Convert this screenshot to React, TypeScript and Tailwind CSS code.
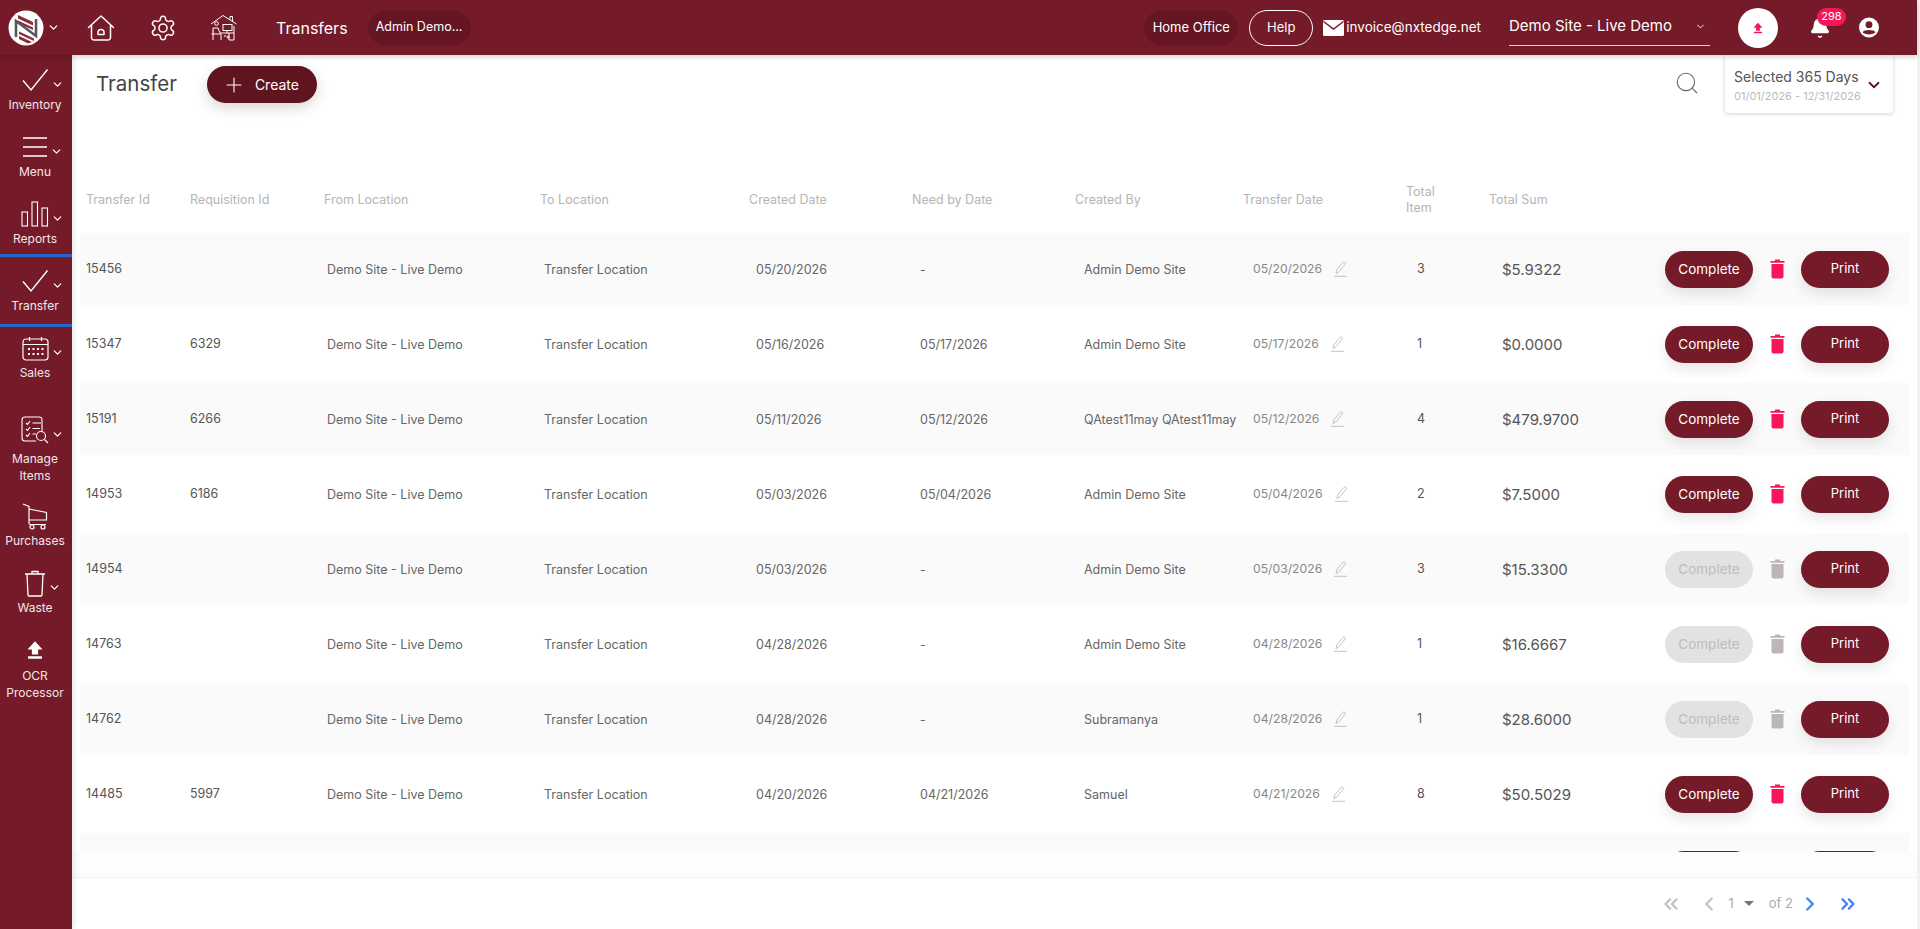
import { ChevronDown, Search, Plus, Bell, ChevronLeft, ChevronRight, ChevronsLeft, ChevronsRight } from 'lucide-react'
import type { ReactNode } from 'react'

type Row = {
  id: string
  req: string
  created: string
  need: string
  by: string
  date: string
  total: string
  sum: string
  active: boolean
}

const rows: Row[] = [
  { id: '15456', req: '', created: '05/20/2026', need: '-', by: 'Admin Demo Site', date: '05/20/2026', total: '3', sum: '$5.9322', active: true },
  { id: '15347', req: '6329', created: '05/16/2026', need: '05/17/2026', by: 'Admin Demo Site', date: '05/17/2026', total: '1', sum: '$0.0000', active: true },
  { id: '15191', req: '6266', created: '05/11/2026', need: '05/12/2026', by: 'QAtest11may QAtest11may', date: '05/12/2026', total: '4', sum: '$479.9700', active: true },
  { id: '14953', req: '6186', created: '05/03/2026', need: '05/04/2026', by: 'Admin Demo Site', date: '05/04/2026', total: '2', sum: '$7.5000', active: true },
  { id: '14954', req: '', created: '05/03/2026', need: '-', by: 'Admin Demo Site', date: '05/03/2026', total: '3', sum: '$15.3300', active: false },
  { id: '14763', req: '', created: '04/28/2026', need: '-', by: 'Admin Demo Site', date: '04/28/2026', total: '1', sum: '$16.6667', active: false },
  { id: '14762', req: '', created: '04/28/2026', need: '-', by: 'Subramanya', date: '04/28/2026', total: '1', sum: '$28.6000', active: false },
  { id: '14485', req: '5997', created: '04/20/2026', need: '04/21/2026', by: 'Samuel', date: '04/21/2026', total: '8', sum: '$50.5029', active: true },
]

const gridCols = 'grid grid-cols-[104px_134px_216px_209px_163px_163px_168px_163px_83px_1fr] pl-[6px]'

const CheckIcon = () => (
  <svg width="28" height="24" viewBox="0 0 28 24" fill="none" stroke="white" strokeWidth="1.4">
    <path d="M2 12.5 L10 22 L26.5 1.5" />
  </svg>
)

const MenuIcon = () => (
  <svg width="26" height="22" viewBox="0 0 26 22" fill="none" stroke="white" strokeWidth="1.6">
    <path d="M1 2h24M1 11h24M1 20h24" />
  </svg>
)

const BarsIcon = () => (
  <svg width="28" height="26" viewBox="0 0 28 26" fill="none" stroke="white" strokeWidth="1.1">
    <rect x="1" y="11" width="5.5" height="14" />
    <rect x="11" y="1" width="5.5" height="24" />
    <rect x="21" y="7" width="5.5" height="18" />
  </svg>
)

const CalendarIcon = () => (
  <svg width="27" height="25" viewBox="0 0 27 25" fill="none" stroke="white" strokeWidth="1.2">
    <rect x="1" y="3" width="25" height="21" rx="3" />
    <path d="M1 8.5h25M7.5 1v4M19.5 1v4" />
    <path d="M6 13h2M10.5 13h2M15 13h2M19.5 13h2M6 18h2M10.5 18h2M15 18h2M19.5 18h2" strokeWidth="2" />
  </svg>
)

const ManageIcon = () => (
  <svg width="28" height="28" viewBox="0 0 28 28" fill="none" stroke="white" strokeWidth="1.1">
    <path d="M21 15V4a3 3 0 0 0-3-3H4a3 3 0 0 0-3 3v18a3 3 0 0 0 3 3h11" />
    <path d="M5 7l1.5 1.5L9 5M5 13l1.5 1.5L9 11M5 19l1.5 1.5L9 17M11.5 7H20M11.5 12.5H19M11.5 18H15" />
    <circle cx="20" cy="20" r="4.5" />
    <path d="M23.5 23.5L27 27" />
  </svg>
)

const CartIcon = () => (
  <svg width="26" height="27" viewBox="0 0 26 27" fill="none" stroke="white" strokeWidth="1.2">
    <path d="M1 1l6 2.5V20a1.5 1.5 0 0 0 1.500 1.500H24" />
    <path d="M7 6l17.500 3.500V17H7" />
    <circle cx="10" cy="24" r="2" />
    <circle cx="21" cy="24" r="2" />
  </svg>
)

const BinIcon = () => (
  <svg width="22" height="27" viewBox="0 0 22 27" fill="none" stroke="white" strokeWidth="1.3">
    <path d="M1 4h20M8 4V1.500h6V4M3 4l1 21a1 1 0 0 0 1 1h12a1 1 0 0 0 1-1l1-21" />
  </svg>
)

const UploadIcon = ({ className, size }: { className: string; size: number }) => (
  <svg width={size} height={size} viewBox="0 0 16 16" className={className} fill="currentColor">
    <path d="M8 1 L14 7.500 H10.500 V11.500 H5.500 V7.500 H2 Z" />
    <rect x="2.500" y="13" width="11" height="2" />
  </svg>
)

const HomeIcon = () => (
  <svg width="28" height="28" viewBox="0 0 28 28" fill="none" stroke="white" strokeWidth="1.500" strokeLinejoin="round" strokeLinecap="round">
    <path d="M1.500 13.500 L14 2 L26.500 13.500 M4.500 11.500 V23.500 a2.500 2.500 0 0 0 2.500 2.500 H21 a2.500 2.500 0 0 0 2.500-2.500 V11.500" />
    <path d="M11 20.500 v-2 a3 3 0 0 1 6 0 v2 Z" />
  </svg>
)

const GearIcon = () => (
  <svg width="28" height="28" viewBox="0 0 24 24" fill="none" stroke="white" strokeWidth="1.250" strokeLinecap="round" strokeLinejoin="round">
    <path d="M12.220 2h-.44a2 2 0 0 0-2 2v.18a2 2 0 0 1-1 1.730l-.43.250a2 2 0 0 1-2 0l-.150-.080a2 2 0 0 0-2.730.730l-.220.380a2 2 0 0 0 .730 2.730l.150.100a2 2 0 0 1 1 1.720v.510a2 2 0 0 1-1 1.740l-.150.090a2 2 0 0 0-.730 2.730l.220.380a2 2 0 0 0 2.730.730l.150-.080a2 2 0 0 1 2 0l.430.250a2 2 0 0 1 1 1.730V20a2 2 0 0 0 2 2h.44a2 2 0 0 0 2-2v-.18a2 2 0 0 1 1-1.730l.430-.250a2 2 0 0 1 2 0l.150.080a2 2 0 0 0 2.730-.730l.220-.390a2 2 0 0 0-.730-2.730l-.150-.080a2 2 0 0 1-1-1.740v-.500a2 2 0 0 1 1-1.740l.150-.090a2 2 0 0 0 .730-2.730l-.220-.380a2 2 0 0 0-2.730-.730l-.150.080a2 2 0 0 1-2 0l-.430-.250a2 2 0 0 1-1-1.730V4a2 2 0 0 0-2-2z" />
    <circle cx="12" cy="12" r="3.500" />
  </svg>
)

const OfficeIcon = () => (
  <svg width="28" height="28" viewBox="0 0 28 28" fill="none" stroke="white" strokeWidth="1">
    <path d="M1 10 L13 1.500 L26.500 10 M20 5.500 V2.500 H22.500 V7.500" />
    <circle cx="6.500" cy="9.500" r="1.800" />
    <path d="M3 26 V14 H8 L10 19 H19 M4 18 H3 M1.500 20 H11 V26 M24 19 H19 V26 H24 V12" />
    <rect x="13" y="10.500" width="9" height="6" />
    <path d="M17 16.500 V19 M14 22 h2 M17 23 a1 1 0 1 0 2 0 a1 1 0 1 0 -2 0" />
  </svg>
)

const Logo = () => (
  <svg width="36" height="36" viewBox="0 0 36 36">
    <circle cx="18" cy="18" r="17.500" fill="white" />
    <path d="M10 5 L25 12 V15.500 L10 8.500 Z M10 10.500 L25 17.500 V20 L10 13 Z" fill="#8a2a3a" />
    <path d="M11 21.500 L26 28.500 V31 L11 24 Z M11 26 L24 32 L20 33.500 L11 29 Z" fill="#8a2a3a" />
    <path d="M8 27 V11 L28 26 V9" fill="none" stroke="#55575c" strokeWidth="2.600" />
  </svg>
)

const MailIcon = () => (
  <svg width="21" height="16" viewBox="0 0 21 16" className="ml-[10px] mr-[2px]">
    <rect width="21" height="16" rx="1.500" fill="white" />
    <path d="M0.500 1.500 L10.500 9 L20.500 1.500" fill="none" stroke="#741a28" strokeWidth="1.500" />
  </svg>
)

const PencilIcon = () => (
  <svg width="15" height="16" viewBox="0 0 15 16" fill="none" stroke="#b5b5b5" strokeWidth="0.800" className="ml-[11px] shrink-0">
    <path d="M1 15.300 H14" />
    <path d="M3 12.500 L3.700 9 L9.800 1.500 A1.200 1.200 0 0 1 12 3.300 L5.900 10.800 Z" />
  </svg>
)

const TrashIcon = ({ active }: { active: boolean }) => (
  <svg
    width="15"
    height="20"
    viewBox="0 0 15 20"
    className={`mx-[16.500px] ${active ? 'text-[#f5175a]' : 'text-[#bdb6b6]'}`}
    fill="currentColor"
  >
    <path d="M5 0.500 H10 V2 H14.500 V3.800 H0.500 V2 H5 Z" />
    <path d="M1.500 5 H13.500 V17.500 A2 2 0 0 1 11.500 19.500 H3.500 A2 2 0 0 1 1.500 17.500 Z" />
  </svg>
)

type SideProps = {
  icon: ReactNode
  label: ReactNode
  chevron?: boolean
  className: string
}

function SideItem({ icon, label, chevron, className }: SideProps) {
  return (
    <div className={`w-[72px] shrink-0 ${className}`}>
      <div className="grid h-[34px] w-[70px] grid-cols-[1fr_auto_1fr] items-center">
        <span />
        <div className="flex justify-center">{icon}</div>
        {chevron ? <ChevronDown size={13} strokeWidth={2.200} className="ml-[2px] mt-[8px] text-white" /> : <span />}
      </div>
      <div className="w-[70px] text-center text-[12px] leading-[16px] text-[#f2e6e8]">{label}</div>
    </div>
  )
}

function Sidebar() {
  return (
    <aside className="relative z-10 flex w-[72px] shrink-0 flex-col bg-[#741a28] pt-[8px] shadow-[2px_0_6px_rgba(0,0,0,0.1)]">
      <SideItem icon={<CheckIcon />} label="Inventory" chevron className="h-[67px]" />
      <SideItem icon={<MenuIcon />} label="Menu" chevron className="h-[67px]" />
      <SideItem icon={<BarsIcon />} label="Reports" chevron className="h-[57px]" />
      <SideItem
        icon={<CheckIcon />}
        label="Transfer"
        chevron
        className="box-border h-[73px] border-y-[3px] border-[#2467c4] pt-[7px]"
      />
      <SideItem icon={<CalendarIcon />} label="Sales" chevron className="h-[86px] pt-[4px]" />
      <SideItem
        icon={<ManageIcon />}
        label={<div className="pt-[3px] leading-[17px]">Manage<br />Items</div>}
        chevron
        className="h-[86px]"
      />
      <SideItem icon={<CartIcon />} label="Purchases" className="h-[67px]" />
      <SideItem icon={<BinIcon />} label="Waste" chevron className="h-[67px]" />
      <SideItem
        icon={<UploadIcon className="text-white" size={20} />}
        label={<div className="leading-[17px]">OCR<br />Processor</div>}
        className="h-[86px]"
      />
    </aside>
  )
}

function Header() {
  return (
    <header className="relative z-20 flex h-[55px] shrink-0 items-center bg-[#741a28] text-white shadow-[0_2px_5px_rgba(0,0,0,0.18)]">
      <div className="ml-[8px] flex items-center">
        <Logo />
        <ChevronDown size={13} strokeWidth={2.400} className="ml-[3px]" />
      </div>
      <div className="ml-[27px]"><HomeIcon /></div>
      <div className="ml-[34px]"><GearIcon /></div>
      <div className="ml-[33px]"><OfficeIcon /></div>
      <div className="ml-[38px] text-[16px]">Transfers</div>
      <div className="ml-[20px] flex h-[34px] w-[103px] items-center justify-center rounded-full bg-[#651622] text-[12.500px]">
        Admin Demo...
      </div>

      <div className="ml-auto flex h-[34px] w-[94px] items-center justify-center rounded-full bg-[#651622] text-[13px]">
        Home Office
      </div>
      <div className="ml-[11px] flex h-[36px] w-[64px] items-center justify-center rounded-full border border-white text-[13px]">
        Help
      </div>
      <MailIcon />
      <div className="text-[13.500px]">invoice@nxtedge.net</div>
      <div className="ml-[28px] flex h-[36px] w-[201px] items-center justify-between border-b border-[#e5cfd2] pb-[1px] text-[15px]">
        <span>Demo Site - Live Demo</span>
        <ChevronDown size={11} strokeWidth={2} className="mr-[4px]" />
      </div>
      <div className="ml-[28px] flex h-[40px] w-[40px] items-center justify-center rounded-full bg-white">
        <UploadIcon className="text-[#f5175a]" size={12} />
      </div>
      <div className="relative ml-[28px] flex w-[28px] justify-center">
        <Bell size={22} fill="white" strokeWidth={1.500} />
        <span className="absolute left-[11px] top-[-9px] flex h-[18px] w-[29px] items-center justify-center rounded-full bg-[#f5175a] text-[11px] leading-none">
          298
        </span>
      </div>
      <div className="ml-[25px] mr-[38px] flex h-[20px] w-[20px] items-center justify-center">
        <svg width="21" height="21" viewBox="0 0 21 21">
          <circle cx="10.500" cy="10.500" r="10.500" fill="white" />
          <circle cx="10.500" cy="7.500" r="3.600" fill="#741a28" />
          <path d="M3.800 15.500 C5 12.500 16 12.500 17.200 15.500 C15 18.500 6 18.500 3.800 15.500 Z" fill="#741a28" />
        </svg>
      </div>
    </header>
  )
}

function TableRow({ row, index }: { row: Row; index: number }) {
  const striped = index % 2 === 0
  return (
    <div
      className={`${gridCols} shrink-0 items-center text-[12.500px] text-[#666] ${
        striped ? 'h-[72px] bg-[#fafafa]' : 'h-[78px] bg-white'
      }`}
    >
      <div className="text-[#555]">{row.id}</div>
      <div className="text-[#555]">{row.req}</div>
      <div className="pl-[3px] pt-[2px]">Demo Site - Live Demo</div>
      <div className="pl-[4px] pt-[2px]">Transfer Location</div>
      <div className="pl-[7px] pt-[2px]">{row.created}</div>
      <div className="pl-[8px] pt-[2px]">{row.need}</div>
      <div className="whitespace-nowrap pl-[9px] pt-[2px]">{row.by}</div>
      <div className="flex items-center pl-[10px] text-[12.200px] text-[#888]">
        <span>{row.date}</span>
        <PencilIcon />
      </div>
      <div className="pl-[11px] text-[#555]">{row.total}</div>
      <div className="flex items-center justify-between pr-[20px]">
        <span className="pl-[13px] pt-[3px] text-[15px] text-[#555]">{row.sum}</span>
        <div className="flex items-center">
          <button
            className={`h-[37px] w-[88px] rounded-full text-[13.500px] ${
              row.active
                ? 'bg-[#741a28] text-white shadow-[0_6px_14px_rgba(0,0,0,0.1)]'
                : 'bg-[#e2e2e2] text-[#bdbdbd]'
            }`}
          >
            Complete
          </button>
          <TrashIcon active={row.active} />
          <button className="h-[37px] w-[88px] rounded-full bg-[#741a28] text-[13px] text-white shadow-[0_6px_14px_rgba(0,0,0,0.1)]">
            Print
          </button>
        </div>
      </div>
    </div>
  )
}

// next row is scrolled almost out of view, only the button tops show
function ClippedRow() {
  return (
    <div className="flex h-[72px] shrink-0 items-center justify-end bg-[#fafafa] pr-[20px]">
      <div className="h-[37px] w-[88px] rounded-full bg-[#741a28]" />
      <div className="w-[48px]" />
      <div className="h-[37px] w-[88px] rounded-full bg-[#741a28]" />
    </div>
  )
}

function Pagination() {
  return (
    <div className="flex h-[52px] shrink-0 items-center justify-end border-t border-[#f2f2f2] bg-white pr-[58px] text-[13px] text-[#aaa]">
      <ChevronsLeft size={22} strokeWidth={2.600} className="text-[#c4c4c4]" />
      <ChevronLeft size={22} strokeWidth={2.600} className="ml-[16px] text-[#c4c4c4]" />
      <span className="ml-[9px]">1</span>
      <span className="ml-[10px] h-0 w-0 border-x-[5px] border-t-[5px] border-x-transparent border-t-[#777]" />
      <span className="ml-[15px]">of 2</span>
      <ChevronRight size={22} strokeWidth={2.600} className="ml-[6px] text-[#4285f4]" />
      <ChevronsRight size={22} strokeWidth={2.600} className="ml-[16px] text-[#4285f4]" />
    </div>
  )
}

function TitleBar() {
  return (
    <div className="relative flex h-[58px] items-start pl-[24px] pr-[24px]">
      <h1 className="mt-[16px] text-[20.500px] leading-[26px] text-[#444]">Transfer</h1>
      <button className="ml-[30px] mt-[11px] flex h-[37px] w-[110px] items-center rounded-full bg-[#5f1420] pl-[15px] text-[14px] text-white shadow-[0_5px_14px_rgba(0,0,0,0.16)]">
        <Plus size={24} strokeWidth={1.100} />
        <span className="ml-[9px]">Create</span>
      </button>
      <Search size={26} strokeWidth={1} className="ml-auto mt-[15px] text-[#666]" />
      <div className="ml-[25px] flex h-[58px] w-[168px] items-center rounded-b-[4px] bg-white pl-[9px] pt-[2px] shadow-[0_1px_4px_rgba(0,0,0,0.18)]">
        <div className="whitespace-nowrap">
          <div className="text-[14px] leading-[18px] text-[#555]">Selected 365 Days</div>
          <div className="mt-[3px] text-[11px] leading-[14px] text-[#bbb]">01/01/2026 - 12/31/2026</div>
        </div>
        <ChevronDown size={18} strokeWidth={2.400} className="ml-auto mr-[10px] text-[#5f1420]" />
      </div>
    </div>
  )
}

export default function App() {
  return (
    <div className="flex h-[929px] w-[1920px] overflow-hidden bg-white font-['Inter','Liberation_Sans',sans-serif]">
      <div className="flex w-[1917px] flex-col">
        <Header />
        <div className="flex min-h-0 flex-1">
          <Sidebar />
          <main className="flex min-w-0 flex-1 flex-col">
            <TitleBar />
            <div className="h-[120px] shrink-0 pl-[8px] pr-[8px]">
              <div className={`${gridCols} h-full items-center pt-[54px] text-[12.500px] leading-[16px] text-[#b5b5b5]`}>
                <div>Transfer Id</div>
                <div>Requisition Id</div>
                <div>From Location</div>
                <div>To Location</div>
                <div>Created Date</div>
                <div>Need by Date</div>
                <div>Created By</div>
                <div>Transfer Date</div>
                <div>Total<br />Item</div>
                <div>Total Sum</div>
              </div>
            </div>
            <div className="flex h-[619px] shrink-0 flex-col overflow-hidden pl-[8px] pr-[8px]">
              {rows.map((row, i) => (
                <TableRow key={row.id} row={row} index={i} />
              ))}
              <ClippedRow />
            </div>
            <div className="h-[25px] shrink-0 bg-[#fdfdfd]" />
            <Pagination />
          </main>
        </div>
      </div>
      <div className="w-[3px] bg-[#f1f1f1]" />
    </div>
  )
}
